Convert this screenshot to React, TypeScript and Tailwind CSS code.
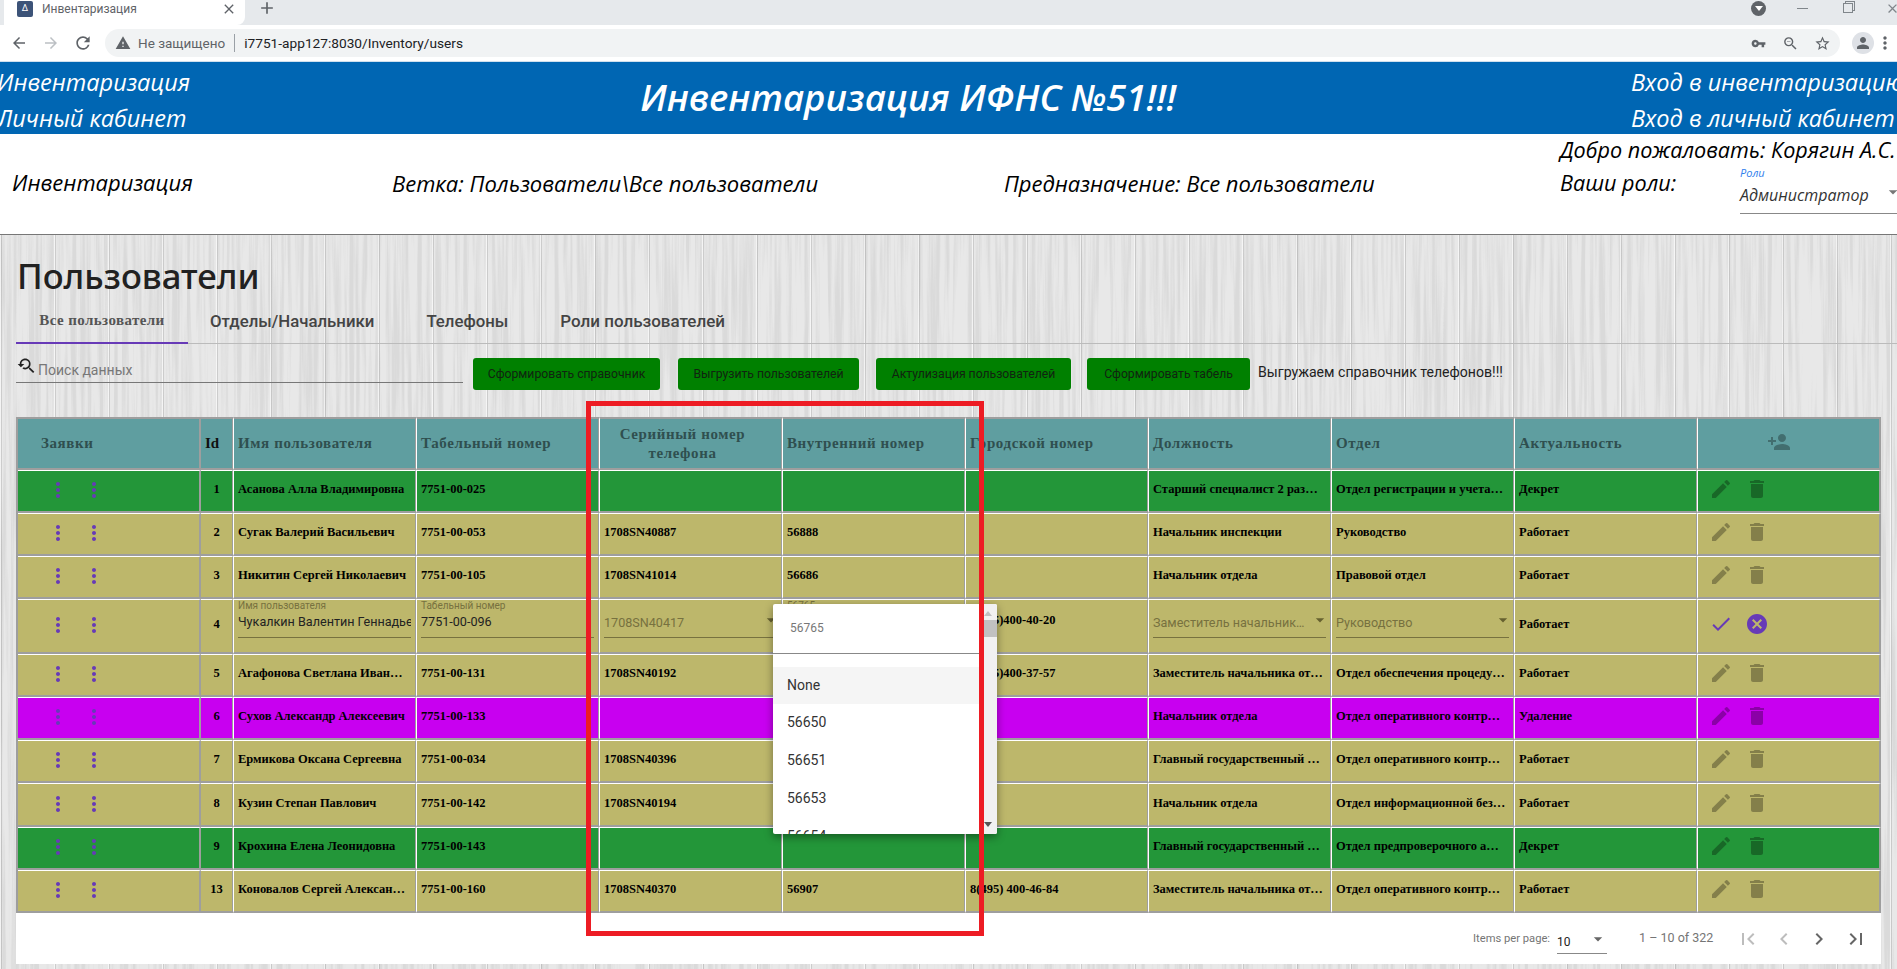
import { useId } from "react";
import {
  MdArrowBack,
  MdArrowForward,
  MdCancel,
  MdCheck,
  MdChevronLeft,
  MdChevronRight,
  MdClose,
  MdDelete,
  MdEdit,
  MdFirstPage,
  MdLastPage,
  MdMoreVert,
  MdOutlineStarBorder,
  MdPerson,
  MdPersonAdd,
  MdRefresh,
  MdVpnKey,
  MdWarning,
  MdYoutubeSearchedFor,
  MdZoomOut,
  MdAdd,
  MdArrowDropDown,
} from "react-icons/md";

type Row = {
  id: number;
  tone: "green" | "khaki" | "magenta";
  name: string;
  tab: string;
  serial?: string;
  inner?: string;
  city?: string;
  post: string;
  dept: string;
  state: string;
};

const rows: Row[] = [
  { id: 1, tone: "green", name: "Асанова Алла Владимировна", tab: "7751-00-025", post: "Старший специалист 2 разряда", dept: "Отдел регистрации и учета налогоплательщиков", state: "Декрет" },
  { id: 2, tone: "khaki", name: "Сугак Валерий Васильевич", tab: "7751-00-053", serial: "1708SN40887", inner: "56888", post: "Начальник инспекции", dept: "Руководство", state: "Работает" },
  { id: 3, tone: "khaki", name: "Никитин Сергей Николаевич", tab: "7751-00-105", serial: "1708SN41014", inner: "56686", post: "Начальник отдела", dept: "Правовой отдел", state: "Работает" },
  { id: 4, tone: "khaki", name: "Чукалкин Валентин Геннадьевич", tab: "7751-00-096", serial: "1708SN40417", inner: "56765", city: "8(495)400-40-20", post: "Заместитель начальника инспекции", dept: "Руководство", state: "Работает" },
  { id: 5, tone: "khaki", name: "Агафонова Светлана Ивановна", tab: "7751-00-131", serial: "1708SN40192", city: "8(495)400-37-57", post: "Заместитель начальника отдела", dept: "Отдел обеспечения процедур банкротства", state: "Работает" },
  { id: 6, tone: "magenta", name: "Сухов Александр Алексеевич", tab: "7751-00-133", post: "Начальник отдела", dept: "Отдел оперативного контроля налогоплательщиков", state: "Удаление" },
  { id: 7, tone: "khaki", name: "Ермикова Оксана Сергеевна", tab: "7751-00-034", serial: "1708SN40396", post: "Главный государственный налоговый инспектор", dept: "Отдел оперативного контроля налогоплательщиков", state: "Работает" },
  { id: 8, tone: "khaki", name: "Кузин Степан Павлович", tab: "7751-00-142", serial: "1708SN40194", post: "Начальник отдела", dept: "Отдел информационной безопасности", state: "Работает" },
  { id: 9, tone: "green", name: "Крохина Елена Леонидовна", tab: "7751-00-143", post: "Главный государственный налоговый инспектор", dept: "Отдел предпроверочного анализа", state: "Декрет" },
  { id: 13, tone: "khaki", name: "Коновалов Сергей Александрович", tab: "7751-00-160", serial: "1708SN40370", inner: "56907", city: "8(495) 400-46-84", post: "Заместитель начальника отдела", dept: "Отдел оперативного контроля налогоплательщиков", state: "Работает" },
];

const tones = {
  green: "bg-[#239639]",
  khaki: "bg-[#bdb76b]",
  magenta: "bg-[#c800f0]",
};

const cell = "border-t border-t-white border-b-2 border-b-[#9e9e9e] border-l border-l-white border-r border-r-[#9e9e9e] p-0";
const textCell = `${cell} pl-[4px] pr-[7px] pb-[3px] truncate font-bold text-[12.5px] text-black`;
const headCell = "border-t-2 border-t-[#9e9e9e] border-b-2 border-b-[#9e9e9e] border-l border-l-white border-r border-r-[#9e9e9e] p-0 px-[4px] text-left font-bold text-[15px] tracking-[0.6px] text-[#2f4f4f]";

function WoodTexture() {
  const id = useId();
  return (
    <>
      <svg className="absolute inset-0 w-full h-full" aria-hidden="true">
        <filter id={id} x="0" y="0" width="100%" height="100%">
          <feTurbulence type="fractalNoise" baseFrequency="0.22 0.005" numOctaves="4" seed="7" />
          <feColorMatrix values="0 0 0 0 0.7  0 0 0 0 0.7  0 0 0 0 0.7  4 0 0 0 -1.7" />
        </filter>
        <rect width="100%" height="100%" fill="#e8e8e8" />
        <rect width="100%" height="100%" filter={`url(#${id})`} />
      </svg>
      <div className="absolute inset-0 bg-[repeating-linear-gradient(90deg,rgba(255,255,255,0.6)_0,rgba(255,255,255,0.6)_1px,rgba(120,120,120,0.25)_1px,rgba(120,120,120,0.25)_2px,transparent_2px,transparent_54px)]" />
    </>
  );
}

function Underlined({ label, value, arrow, muted }: { label?: string; value: string; arrow?: boolean; muted?: boolean }) {
  return (
    <div className="relative h-[38px] mx-[1px] mt-[-14px] border-b border-[#77713f] font-['Roboto',sans-serif]">
      {label && <div className="text-[10px] leading-[12px] text-[#77713f] truncate">{label}</div>}
      <div className={`text-[12.6px] leading-[20px] whitespace-nowrap overflow-hidden ${label ? "" : "pt-[12px] leading-[22px]"} ${muted ? "text-[#77713f] pr-[18px] text-ellipsis" : "text-[#222]"}`}>
        {value}
      </div>
      {arrow && <MdArrowDropDown className="absolute right-[-4px] top-[10px] text-[#66612f]" size={20} />}
    </div>
  );
}

function Actions({ editing }: { editing: boolean }) {
  if (editing) {
    return (
      <div className="flex items-center pl-[11px] gap-[12px] text-[#673ab7] mt-[-4px]">
        <MdCheck size={24} />
        <MdCancel size={24} />
      </div>
    );
  }
  return (
    <div className="flex items-center pl-[11px] gap-[12px] text-black/30 mt-[-4px]">
      <MdEdit size={24} />
      <MdDelete size={24} />
    </div>
  );
}

function UsersTable() {
  return (
    <table className="table-fixed border-separate border-spacing-0 w-[1865px] border-l-2 border-l-[#9e9e9e] font-['Liberation_Serif',serif]">
      <colgroup>
        <col className="w-[183px]" />
        <col className="w-[32px]" />
        <col className="w-[183px]" />
        <col className="w-[183px]" />
        <col className="w-[183px]" />
        <col className="w-[183px]" />
        <col className="w-[183px]" />
        <col className="w-[183px]" />
        <col className="w-[183px]" />
        <col className="w-[183px]" />
        <col className="w-[184px]" />
      </colgroup>
      <thead>
        <tr className="bg-[#5f9ea0] h-[53px]">
          <th className={`${headCell} !pl-[23px] !border-l-0 !border-r-2`}>Заявки</th>
          <th className={`${headCell} !text-[#111] !tracking-normal !pl-[4px] !pr-0 !border-l-0`}>Id</th>
          <th className={headCell}>Имя пользователя</th>
          <th className={headCell}>Табельный номер</th>
          <th className={`${headCell} !text-center !pr-[20px] leading-[19px]`}>Серийный номер<br />телефона</th>
          <th className={headCell}>Внутренний номер</th>
          <th className={headCell}>Городской номер</th>
          <th className={headCell}>Должность</th>
          <th className={headCell}>Отдел</th>
          <th className={headCell}>Актуальность</th>
          <th className={`${headCell} !border-r-2`}>
            <MdPersonAdd size={24} className="ml-[65px] mt-[-4px] text-black/30" />
          </th>
        </tr>
      </thead>
      <tbody>
        {rows.map((r) => {
          const editing = r.id === 4;
          return (
            <tr key={r.id} className={`${tones[r.tone]} ${editing ? "h-[55px]" : r.id === 8 ? "h-[44px]" : "h-[43px]"}`}>
              <td className={`${cell} !border-l-0 !border-r-2`}>
                <div className="flex pl-[28px] gap-[12px] text-[#673ab7] mt-[-2px]">
                  <MdMoreVert size={24} />
                  <MdMoreVert size={24} />
                </div>
              </td>
              <td className={`${cell} !border-l-0 text-center font-bold text-[12.5px] text-black pb-[3px]`}>{r.id}</td>
              {editing ? (
                <>
                  <td className={`${cell} px-[3px]`}><Underlined label="Имя пользователя" value={r.name} /></td>
                  <td className={`${cell} px-[3px]`}><Underlined label="Табельный номер" value={r.tab} /></td>
                  <td className={`${cell} px-[3px]`}><Underlined value={r.serial ?? ""} arrow muted /></td>
                  <td className={`${cell} px-[3px]`}><Underlined label={r.inner} value="" /></td>
                  <td className={`${textCell} !pb-[11px]`}>{r.city}</td>
                  <td className={`${cell} px-[3px]`}><Underlined value={r.post} arrow muted /></td>
                  <td className={`${cell} px-[3px]`}><Underlined value={r.dept} arrow muted /></td>
                </>
              ) : (
                <>
                  <td className={textCell}>{r.name}</td>
                  <td className={textCell}>{r.tab}</td>
                  <td className={textCell}>{r.serial}</td>
                  <td className={textCell}>{r.inner}</td>
                  <td className={textCell}>{r.city}</td>
                  <td className={textCell}>{r.post}</td>
                  <td className={textCell}>{r.dept}</td>
                </>
              )}
              <td className={textCell}>{r.state}</td>
              <td className={`${cell} !border-r-2`}><Actions editing={editing} /></td>
            </tr>
          );
        })}
      </tbody>
    </table>
  );
}

function BrowserChrome() {
  return (
    <div className="font-['Roboto',sans-serif]">
      <div className="h-[25px] bg-[#e6e9ec] flex items-start text-[#5f6368]">
        <div className="w-[241px] h-full bg-white rounded-br-lg flex items-start pt-[1px] pl-[13px] pr-[8px] ml-[4px]">
          <div className="w-[16px] h-[16px] bg-[#3c5378] rounded-[2px] flex items-center justify-center text-white text-[9px]">Δ</div>
          <span className="ml-[9px] text-[12px] leading-[16px] text-[#5f6368]">Инвентаризация</span>
          <MdClose size={16} className="ml-auto" />
        </div>
        <MdAdd size={20} className="ml-[12px] mt-[-2px]" />
        <div className="ml-auto flex items-center text-[#5f6368] h-[16px]">
          <div className="w-[15px] h-[15px] rounded-full bg-[#5f6368] flex items-center justify-center mr-[31px]">
            <div className="w-0 h-0 border-x-[4px] border-x-transparent border-t-[5px] border-t-white" />
          </div>
          <div className="w-[11px] h-px bg-[#80868b] mr-[35px]" />
          <div className="w-[10px] h-[10px] border border-[#80868b] mr-[32px] shadow-[2px_-2px_0_-1px_#e6e9ec,2px_-2px_0_0_#80868b]" />
          <MdClose size={15} className="mr-[-3px] text-[#80868b]" />
        </div>
      </div>
      <div className="h-[37px] bg-white border-b border-b-[#cfe0ee] flex items-center text-[#5f6368]">
        <MdArrowBack size={18} className="ml-[10px]" />
        <MdArrowForward size={18} className="ml-[14px] text-[#bcc0c4]" />
        <MdRefresh size={20} className="ml-[13px]" />
        <div className="ml-[12px] h-[28px] w-[1735px] rounded-full bg-[#f1f3f4] flex items-center">
          <MdWarning size={16} className="ml-[10px]" />
          <span className="ml-[7px] text-[13.5px] text-[#5f6368]">Не защищено</span>
          <span className="ml-[9px] h-[18px] w-px bg-[#9aa0a6]" />
          <span className="ml-[9px] text-[13.7px] text-[#202124]">i7751-app127:8030/Inventory/users</span>
          <MdVpnKey size={15} className="ml-auto" />
          <MdZoomOut size={17} className="ml-[16px]" />
          <MdOutlineStarBorder size={17} className="ml-[15px] mr-[9px]" />
        </div>
        <div className="ml-[12px] w-[22px] h-[22px] rounded-full bg-[#dee1e6] flex items-center justify-center">
          <MdPerson size={18} />
        </div>
        <MdMoreVert size={20} className="ml-[1px] shrink-0" />
      </div>
    </div>
  );
}

export default function App() {
  return (
    <div className="relative w-[1897px] h-[969px] overflow-hidden bg-[#e9e9e9] font-['Roboto',sans-serif]">
      <BrowserChrome />

      <header className="relative h-[72px] bg-[#0066b3] text-white italic font-['Open_Sans',sans-serif] flex justify-between overflow-hidden">
        <nav className="ml-[-3px] text-[23.5px] leading-[36px] pt-[2px]">
          <div>Инвентаризация</div>
          <div>Личный кабинет</div>
        </nav>
        <h1 className="mt-[11px] ml-[-5px] text-[36.5px] leading-[48px] font-semibold whitespace-nowrap">Инвентаризация ИФНС №51!!!</h1>
        <nav className="w-[266px] text-[23.5px] leading-[36px] pt-[2px] whitespace-nowrap">
          <div>Вход в инвентаризацию</div>
          <div>Вход в личный кабинет</div>
        </nav>
      </header>

      <section className="h-[101px] bg-white border-b border-b-[#777] italic font-['Open_Sans',sans-serif] text-[22px] text-black flex items-start overflow-hidden">
        <div className="w-[392px] shrink-0 pl-[12px] pt-[32px]">Инвентаризация</div>
        <div className="w-[612px] shrink-0 pt-[33px]">Ветка: Пользователи\Все пользователи</div>
        <div className="w-[556px] shrink-0 pt-[33px] tracking-[-0.05px]">Предназначение: Все пользователи</div>
        <div className="w-[337px] shrink-0 whitespace-nowrap text-[21.6px]">
          <div className="leading-[32px]">Добро пожаловать: Корягин А.С.</div>
          <div className="flex">
            <div className="w-[180px] pt-[1px]">Ваши роли:</div>
            <div className="flex-1 h-[48px] border-b border-b-[#888] relative">
              <div className="text-[11px] leading-[14px] text-[#2f80ed]">Роли</div>
              <div className="text-[16px] leading-[31px] text-[#333]">Администратор</div>
              <MdArrowDropDown size={20} className="absolute right-[-6px] top-[16px] text-[#777]" />
            </div>
          </div>
        </div>
      </section>

      <main className="relative h-[734px]">
        <WoodTexture />
        <div className="relative px-[16px]">
          <h2 className="h-[63px] pt-[17px] text-[34.7px] leading-[48px] text-[#212121] font-medium font-['Noto_Sans',sans-serif] ml-px">Пользователи</h2>
          <div className="h-[46px] flex items-center border-b border-b-[#bbb] relative mr-[-16px] text-[16.8px] text-[#444] font-medium">
            <div className="relative w-[172px] h-full flex items-center justify-center font-['Liberation_Serif',serif] font-bold text-[15px] tracking-[0.4px] text-[#555] pb-[1px]">
              Все пользователи
              <div className="absolute left-0 right-0 bottom-[-1px] h-[2px] bg-[#673ab7]" />
            </div>
            <div className="ml-[22px] pt-[2px]">Отделы/Начальники</div>
            <div className="ml-[52px] pt-[2px]">Телефоны</div>
            <div className="ml-[52px] pt-[2px] text-[17px]">Роли пользователей</div>
          </div>
          <div className="h-[73px] flex items-start">
            <div className="w-[447px] h-[39px] border-b border-b-[#777] flex items-center text-[14px] text-[#777]">
              <MdYoutubeSearchedFor size={20} className="text-[#222] mt-[6px] mr-[2px]" />
              <span className="pt-[14px]">Поиск данных</span>
            </div>
            <div className="flex items-center mt-[14px] ml-[10px] text-[12.2px] text-[#102410]">
              <button className="w-[187px] h-[32px] rounded-[3px] bg-[#008000]">Сформировать справочник</button>
              <button className="ml-[18px] w-[181px] h-[32px] rounded-[3px] bg-[#008000]">Выгрузить пользователей</button>
              <button className="ml-[17px] w-[195px] h-[32px] rounded-[3px] bg-[#008000]">Актулизация пользователей</button>
              <button className="ml-[16px] w-[163px] h-[32px] rounded-[3px] bg-[#008000]">Сформировать табель</button>
              <span className="ml-[8px] text-[14.1px] text-[#222] mt-[-2px]">Выгружаем справочник телефонов!!!</span>
            </div>
          </div>
          <UsersTable />
          <div className="w-[1865px] h-[51px] bg-white flex items-center text-[12px] text-[#757575] whitespace-nowrap">
            <span className="ml-[1457px] mt-[2px] shrink-0 text-[11.2px]">Items per page:</span>
            <div className="relative ml-[7px] w-[50px] h-[26px] border-b border-b-[#888] text-[#222] pt-[5px] mt-[4px] shrink-0">
              10
              <MdArrowDropDown size={20} className="absolute right-[-1px] top-[1px] text-[#666]" />
            </div>
            <span className="ml-[32px] text-[12.5px] shrink-0">1 – 10 of 322</span>
            <MdFirstPage size={24} className="ml-[23px] text-[#bdbdbd] shrink-0" />
            <MdChevronLeft size={24} className="ml-[12px] text-[#bdbdbd] shrink-0" />
            <MdChevronRight size={24} className="ml-[11px] text-[#666] shrink-0" />
            <MdLastPage size={24} className="ml-[13px] text-[#666] shrink-0" />
          </div>
        </div>
      </main>

      {/* открытый список внутреннего номера */}
      <div className="absolute left-[773px] top-[604px] w-[224px] h-[230px] bg-white rounded-[2px] shadow-[0_3px_8px_rgba(0,0,0,0.4)] flex overflow-hidden font-['Roboto',sans-serif] text-[14px] text-[#333]">
        <div className="flex-1">
          <div className="h-[50px] border-b border-b-[#888] pl-[17px] pt-[15px] text-[12px] text-[#777]">56765</div>
          <div className="h-[13px]" />
          <div className="h-[37px] bg-[#f5f5f5] pl-[14px] flex items-center">None</div>
          <div className="h-[37px] pl-[14px] flex items-center">56650</div>
          <div className="h-[38px] pl-[14px] flex items-center">56651</div>
          <div className="h-[38px] pl-[14px] flex items-center">56653</div>
          <div className="h-[38px] pl-[14px] flex items-center">56654</div>
        </div>
        <div className="w-[18px] bg-[#f1f1f1] flex flex-col items-center">
          <div className="mt-[7px] w-0 h-0 border-x-[4px] border-x-transparent border-b-[5px] border-b-[#c1c1c1]" />
          <div className="mt-[4px] w-full h-[17px] bg-[#c1c1c1]" />
          <div className="mt-auto mb-[7px] w-0 h-0 border-x-[4px] border-x-transparent border-t-[5px] border-t-[#555]" />
        </div>
      </div>

      {/* красная рамка поверх снимка */}
      <div className="absolute left-[586px] top-[401px] w-[398px] h-[535px] border-[5px] border-[#ed1c24] pointer-events-none" />
    </div>
  );
}
